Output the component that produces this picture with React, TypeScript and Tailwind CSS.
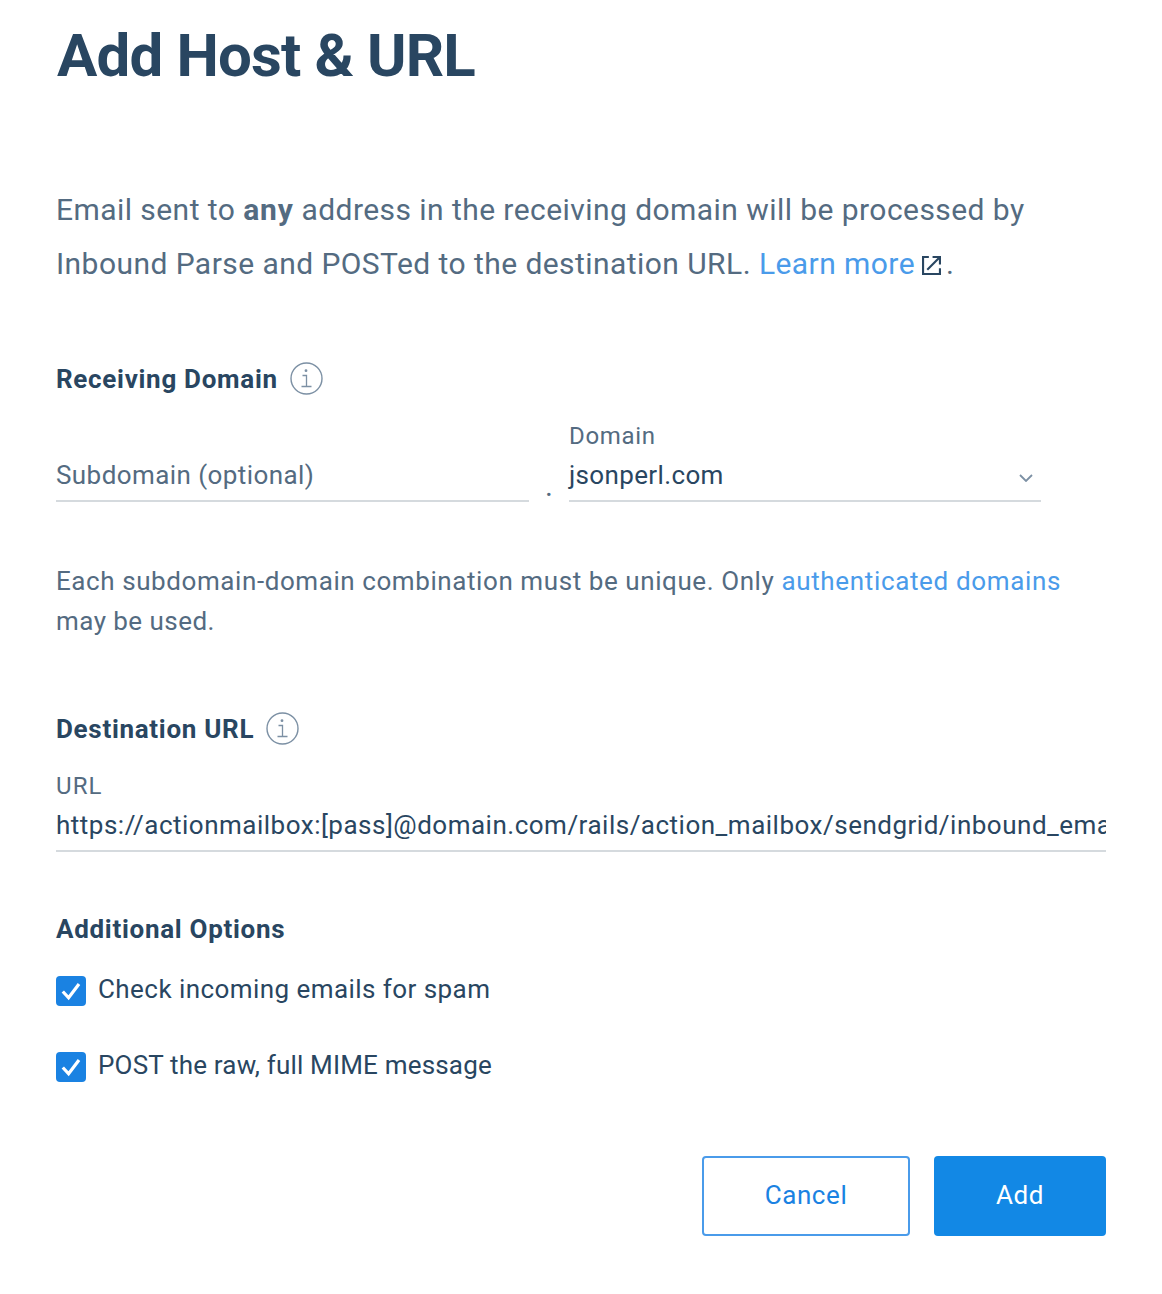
import type { ReactNode } from "react";

function InfoIcon() {
  return (
    <svg className="mb-px ml-3 h-[33px] w-[33px] shrink-0" viewBox="0 0 33 33" fill="none" stroke="#7c90a4" aria-hidden="true">
      <circle cx="16.5" cy="16.5" r="15.5" strokeWidth="1.4" />
      <circle cx="16" cy="8.7" r="1.4" fill="#7c90a4" stroke="none" />
      <path d="M12.5 13.5H16.5V24.5M11.5 24.5H21.5" strokeWidth="1.3" />
    </svg>
  );
}

function ExternalIcon() {
  return (
    <svg className="mr-[5px] ml-[7px] inline-block h-[19px] w-[19px] align-[-1px]" viewBox="0 0 18 18" fill="none" stroke="#294661" strokeWidth="2" aria-hidden="true">
      <path d="M6.5 1H1V17H17V11.5M10 1H17V8M17 1L5 13" />
    </svg>
  );
}

function SectionTitle({ children, info }: { children: ReactNode; info?: boolean }) {
  return (
    <div className="flex h-8 items-center text-[26px] leading-8 font-bold text-[#294661] tracking-[0.7px]">
      <h2>{children}</h2>
      {info && <InfoIcon />}
    </div>
  );
}

function Option({ children }: { children: ReactNode }) {
  return (
    <label className="flex h-[30px] items-start">
      <span className="flex h-[30px] w-[30px] items-center justify-center rounded-[4px] bg-[#1a82e2]">
        <svg className="h-[30px] w-[30px]" viewBox="0 0 30 30" fill="none" stroke="#fff" strokeWidth="3.2" aria-hidden="true">
          <path d="M6.8 15.5L12.6 21.8L23 8" />
        </svg>
      </span>
      <span className="ml-3 text-[26px] leading-[26px] whitespace-nowrap">{children}</span>
    </label>
  );
}

export default function App() {
  return (
    <main className="min-h-[1294px] w-[1162px] bg-white px-14 pt-5 font-['Roboto',sans-serif] text-[#294661]">
      <h1 className="ml-px text-[60px] leading-[72px] font-bold tracking-[-0.85px]">Add Host &amp; URL</h1>

      <p className="mt-[91px] text-[30px] leading-[54px] whitespace-nowrap text-[#546b81] tracking-[0.44px]">
        Email sent to <strong className="font-bold tracking-[0.8px]">any</strong> address in the receiving domain will be processed by
        <br />
        Inbound Parse and POSTed to the destination URL. <a className="text-[#4a9bea]">Learn more</a>
        <ExternalIcon />.
      </p>

      <section className="mt-[72px]">
        <SectionTitle info>Receiving Domain</SectionTitle>
        <div className="mt-[25px] flex h-[82px] items-end">
          <div className="h-[47px] w-[473px] border-b-2 border-[#d5dade] text-[26px] leading-10 text-[#546b81] tracking-[0.42px]">Subdomain (optional)</div>
          <div className="flex w-10 justify-center text-[30px] leading-8 text-[#546b81]">.</div>
          <div className="w-[472px]">
            <div className="text-[24px] leading-8 text-[#546b81] tracking-[0.7px]">Domain</div>
            <div className="mt-[3px] flex h-[47px] justify-between border-b-2 border-[#d5dade] text-[26px] leading-10 tracking-[0.36px]">
              <span>jsonperl.com</span>
              <svg className="mt-[19px] mr-2 h-2 w-[14px]" viewBox="0 0 14 8" fill="none" stroke="#7c90a4" strokeWidth="1.8" aria-hidden="true">
                <path d="M1 1L7 7L13 1" />
              </svg>
            </div>
          </div>
        </div>
        <p className="mt-[59px] text-[26px] leading-10 whitespace-nowrap text-[#546b81] tracking-[0.58px]">
          Each subdomain-domain combination must be unique. Only <a className="text-[#4a9bea] tracking-[0.65px]">authenticated domains</a>
          <br />
          <span className="tracking-[0.45px]">may be used.</span>
        </p>
      </section>

      <section className="mt-[72px]">
        <div className="tracking-[0.8px]">
          <SectionTitle info>Destination URL</SectionTitle>
        </div>
        <div className="mt-[25px] text-[24px] leading-8 text-[#546b81] tracking-[1.1px]">URL</div>
        <div className="mt-[3px] h-[47px] w-[1050px] overflow-hidden border-b-2 border-[#d5dade] text-[26px] leading-10 whitespace-nowrap tracking-[0.5px]">
          https://actionmailbox:[pass]@domain.com/rails/action_mailbox/sendgrid/inbound_emails
        </div>
      </section>

      <section className="mt-[61px]">
        <SectionTitle>Additional Options</SectionTitle>
        <div className="mt-[31px] flex flex-col gap-[46px]">
          <div className="tracking-[0.44px]"><Option>Check incoming emails for spam</Option></div>
          <div className="tracking-[0.18px]"><Option>POST the raw, full MIME message</Option></div>
        </div>
      </section>

      <div className="mt-[74px] flex justify-end gap-6 text-[26px] tracking-[0.6px]">
        <button className="h-20 w-[208px] rounded-[4px] border-2 border-[#4a9bea] pb-0.5 text-[#1a82e2]">Cancel</button>
        <button className="h-20 w-[172px] rounded-[4px] bg-[#1288e5] pb-0.5 text-white">Add</button>
      </div>
    </main>
  );
}
